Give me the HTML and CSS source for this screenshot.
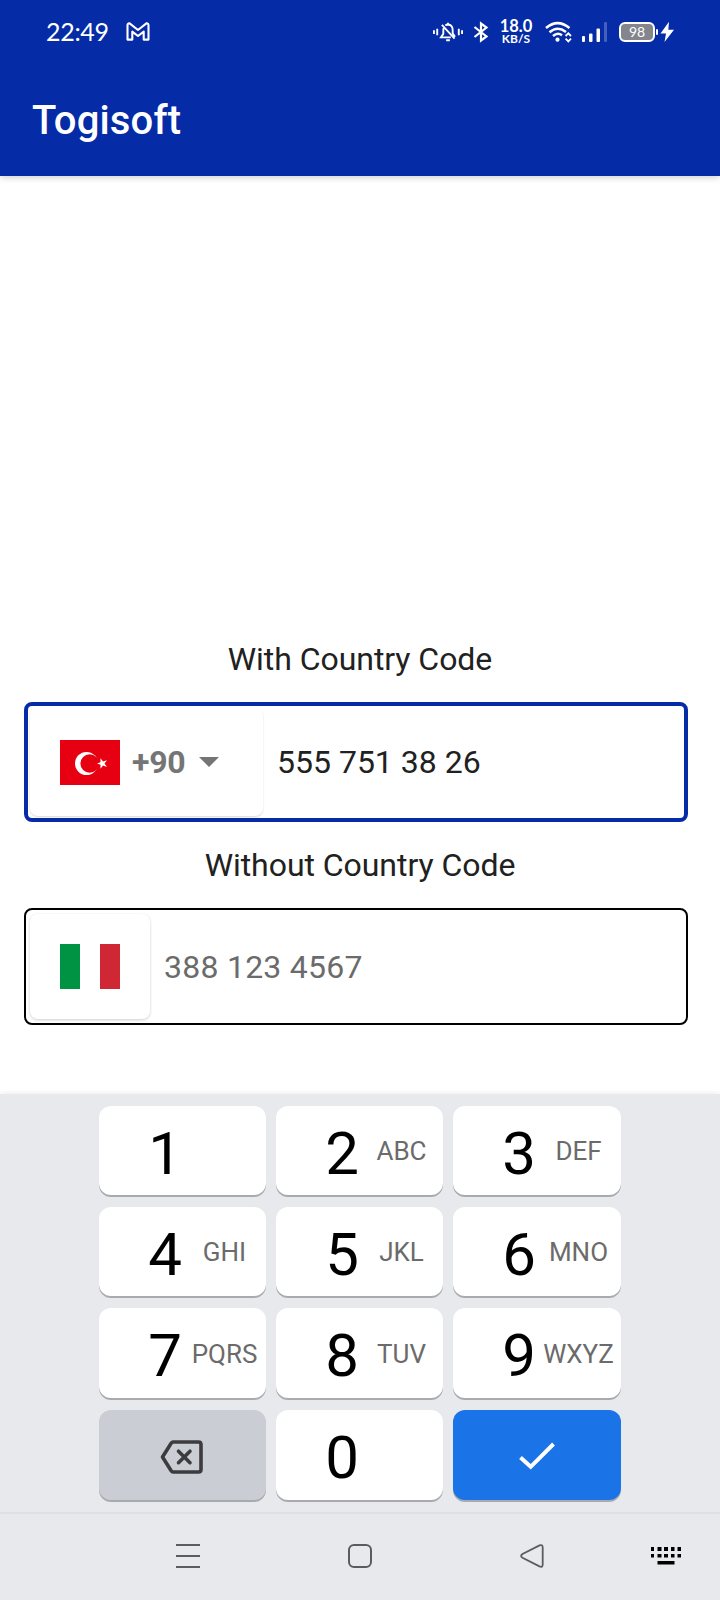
FILE: index.html
```html
<!DOCTYPE html>
<html lang="en">
<head>
<meta charset="utf-8">
<title>Togisoft</title>
<link rel="stylesheet" href="styles.css">
</head>
<body>
<header class="top">
  <div class="status">
    <span class="time">22:49</span>
    <svg class="gmail" width="24" height="20" viewBox="0 0 24 20" fill="none" stroke="#fff" stroke-width="2.1" stroke-linejoin="round"><path d="M1.5 3.2Q1.5 1.2 3.6 1.4L12 8 20.4 1.4Q22.5 1.2 22.5 3.2V17.6H17.7V9.6L12 14 6.3 9.6V17.6H1.5Z"/></svg>
    <div class="indicators">
      <svg class="bell" width="30" height="24" viewBox="0 0 32 24" fill="none" stroke="#fff" stroke-width="2"><path d="M1 10v4M4.500 8.500v7M27.500 8.500v7M31 10v4M13.200 5.100Q14.400 4 16 4Q21 4.500 21 10V13.500L23.500 17M19 17.700H8.500L11 14V10L11.300 7.800M16 2V4.500M9.500 4.500L23 19M14 20.800H18"/></svg>
      <svg class="bluetooth" width="16" height="24" viewBox="0 0 16 24" fill="none" stroke="#fff" stroke-width="2.200"><path d="M1.500 7L13.500 16.500 8 20.500V3.500L13.500 7.500 1.500 17"/></svg>
      <div class="speed"><span class="rate">18.0</span><span class="unit">KB/S</span></div>
      <svg class="wifi" width="28" height="24" viewBox="0 0 28 24" fill="none" stroke="#fff" stroke-width="2.500"><path d="M1 8Q12.500-1.800 24.500 8M4.500 12.300Q12.500 5.500 21 12M8 16Q12.500 12 17 15.200"/><circle cx="12.500" cy="19.700" r="2.100" fill="#fff" stroke="none"/><path d="M20.600 16L23.300 13.300 26 16M20.600 18.700L23.300 21.400 26 18.700" stroke-width="1.800"/></svg>
      <svg class="signal" width="26" height="24" viewBox="0 0 26 24" fill="#fff"><rect x="0" y="16" width="3" height="6" rx="1"/><rect x="7" y="13.500" width="3.500" height="8.500" rx="1"/><rect x="14.500" y="8.500" width="3.500" height="13.500" rx="1"/><rect x="22" y="2" width="3" height="20" rx="1" opacity=".25"/></svg>
      <div class="battery">98</div>
      <svg class="bolt" width="15" height="24" viewBox="0 0 15 24" fill="#fff"><path d="M9 1.800L.5 13.500H6L4.500 22 14 9.800H8.300Z"/></svg>
    </div>
  </div>
  <h1 class="title">Togisoft</h1>
</header>

<main class="content">
  <p class="label">With Country Code</p>
  <div class="field focused">
    <div class="picker with-code">
      <svg width="60" height="45" viewBox="0 0 60 45"><path fill="#e70011" d="M0 0h60v45H0z"/><circle cx="26.500" cy="23.500" r="11.500" fill="#fff"/><circle cx="29.700" cy="23.500" r="9.300" fill="#e70011"/><path fill="#fff" d="M37 23.500L40.500 22.300 40.500 18.300 43 21.500 47 20.200 44.500 23.500 47 27 43 25.600 40.500 28.800 40.500 24.700Z"/></svg>
      <span class="code">+90</span>
      <svg class="caret" width="20" height="10" viewBox="0 0 20 10"><path fill="#757575" d="M0 0h20L10 10z"/></svg>
    </div>
    <span class="number">555 751 38 26</span>
  </div>
  <p class="label second">Without Country Code</p>
  <div class="field">
    <div class="picker">
      <svg width="60" height="45" viewBox="0 0 60 45"><path fill="#009344" d="M0 0h20v45H0z"/><path fill="#fff" d="M20 0h20v45H20z"/><path fill="#cf2734" d="M40 0h20v45H40z"/></svg>
    </div>
    <span class="number hint">388 123 4567</span>
  </div>
</main>

<section class="keyboard">
  <div class="keys">
    <div class="key"><span class="digit">1</span></div>
    <div class="key"><span class="digit">2</span><span class="letters">ABC</span></div>
    <div class="key"><span class="digit">3</span><span class="letters">DEF</span></div>
    <div class="key"><span class="digit">4</span><span class="letters">GHI</span></div>
    <div class="key"><span class="digit">5</span><span class="letters">JKL</span></div>
    <div class="key"><span class="digit">6</span><span class="letters">MNO</span></div>
    <div class="key tall"><span class="digit">7</span><span class="letters">PQRS</span></div>
    <div class="key tall"><span class="digit">8</span><span class="letters">TUV</span></div>
    <div class="key tall"><span class="digit">9</span><span class="letters">WXYZ</span></div>
    <div class="key action erase">
      <svg width="44" height="36" viewBox="0 0 44 36" fill="none" stroke="#3c3c3e" stroke-width="3.600" stroke-linejoin="round"><path d="M13 3H38.500Q41 3 41 5.500V30.500Q41 33 38.500 33H13Q12 33 11 31.500L2.500 18 11 4.500Q12 3 13 3Z"/><path d="M18.500 12.200L30 23.700M30 12.200L18.500 23.700" stroke-linecap="round"/></svg>
    </div>
    <div class="key"><span class="digit">0</span></div>
    <div class="key action confirm">
      <svg width="36" height="28" viewBox="0 0 36 28" fill="none" stroke="#fff" stroke-width="4"><path d="M1.500 15.500L11.700 24.800 34.500 2"/></svg>
    </div>
  </div>
</section>

<nav class="nav">
  <svg class="menu" width="24" height="24" viewBox="0 0 24 24" stroke="#5c5c5e" stroke-width="2"><path d="M0 1h24M0 12h24M0 23h24"/></svg>
  <svg class="home" width="24" height="24" viewBox="0 0 24 24" fill="none" stroke="#5c5c5e" stroke-width="2"><rect x="1" y="1" width="22" height="22" rx="5"/></svg>
  <svg class="back" width="24" height="24" viewBox="0 0 24 24" fill="none" stroke="#5c5c5e" stroke-width="1.800"><path d="M19.500 1.400Q22.700.2 22.700 3.500V20.500Q22.700 23.800 19.500 22.400L2.500 13.700Q-.3 12 2.500 10Z"/></svg>
  <svg class="ime" width="30" height="18" viewBox="0 0 30 18" fill="#000"><path d="M0 0h3v4H0zM6.500 0h4v4h-4zM13 0h4v4h-4zM20 0h3.500v4H20zM26.500 0H30v4h-3.500zM0 7h3v3.500H0zM6.500 7h4v3.500h-4zM13 7h4v3.500h-4zM20 7h3.500v3.500H20zM26.500 7H30v3.500h-3.500zM6.500 14h17v3.500h-17z"/></svg>
</nav>
</body>
</html>
```

FILE: styles.css
```css
* { box-sizing: border-box; }
body { margin: 0; width: 720px; height: 1600px; background: #fff; font-family: Roboto, sans-serif; overflow: hidden; display: flex; flex-direction: column; }
svg { display: block; flex: none; }

.top { height: 176px; flex: none; background: #052ba6; color: #fff; box-shadow: 0 1px 7px rgba(0, 0, 0, .22); }
.status { height: 64px; display: flex; align-items: center; padding: 0 45px 0 46px; }
.time { width: 80px; margin-top: -2px; font: 25px/64px Lato, sans-serif; letter-spacing: -.3px; }
.gmail { margin-top: -1px; }
.indicators { display: flex; align-items: center; margin-left: auto; }
.bluetooth { margin-left: 10px; }
.speed { width: 36px; margin: 0 1px 0 9px; display: flex; flex-direction: column; align-items: center; font-family: Lato, sans-serif; font-weight: 700; }
.rate { font-size: 16.500px; line-height: 14px; }
.unit { font-size: 12px; line-height: 12px; }
.wifi { margin-left: 10px; }
.signal { margin-left: 9px; }
.battery { width: 36px; height: 20px; margin-left: 11px; border: 2px solid #fff; border-radius: 6px; background: #85868d; font: 14px/15px Lato, sans-serif; text-align: center; position: relative; }
.battery::after { content: ""; position: absolute; right: -5px; top: 5px; width: 2px; height: 6px; background: #fff; border-radius: 1px; }
.bolt { margin-left: 5px; }
.title { margin: 0; padding: 29px 32px 0; font-size: 40px; line-height: 56px; font-weight: 500; letter-spacing: .15px; }

.content { height: 918px; flex: none; padding: 461px 32px 0 24px; }
.label { margin: 0 0 21px; padding-left: 8px; text-align: center; font-size: 32px; line-height: 44px; color: #212121; letter-spacing: -.05px; }
.label.second { margin-top: 21px; }
.field { height: 117px; display: flex; align-items: center; border: 2px solid #000; border-radius: 8px; padding: 0 4px; }
.field.focused { height: 120px; border: 4px solid #052ba6; padding: 0 2px; }
.picker { width: 120px; height: 105px; display: flex; align-items: center; padding-left: 30px; border-radius: 8px; box-shadow: 0 1px 3px rgba(0, 0, 0, .2); }
.picker.with-code { width: 233px; height: 108px; box-shadow: 0 1px 2px rgba(0, 0, 0, .16); }
.code { width: 67px; padding-left: 12px; font-size: 32px; font-weight: 700; color: #757575; line-height: 44px; letter-spacing: -.3px; }
.caret { margin-left: 12px; }
.number { margin-left: 14px; font-size: 32px; line-height: 44px; color: #212121; }
.hint { color: #6b6b6b; letter-spacing: .25px; }

.keyboard { height: 418px; flex: none; background: #e8e9ed; padding: 12px 99px 0; box-shadow: 0 0 6px rgba(0, 0, 0, .1); }
.keys { display: grid; grid-template-columns: 167px 167px 168px; grid-template-rows: 89px 89px 90px 90px; column-gap: 10px; row-gap: 12px; }
.key { display: flex; background: #fff; border-radius: 12px; padding-left: 49px; box-shadow: 0 2px 0 #a9aaae; }
.digit { width: 34px; padding-top: 3px; text-align: center; font-size: 60px; line-height: 89px; color: #000; }
.letters { width: 83px; margin-left: 1px; text-align: center; font-size: 26px; line-height: 90px; color: #6b6b6b; }
.tall .letters { line-height: 92px; }
.key.tall { height: 90px; }
.action { padding: 0; align-items: center; justify-content: center; }
.erase { background: #cbcdd5; }
.erase svg { margin: 4px 0 0 -1px; }
.confirm { background: #1b73e8; }
.confirm svg { margin: 1px 0 0 0; }

.nav { flex: 1; display: flex; background: #e8e9ed; border-top: 2px solid #dfe0e3; padding-top: 30px; }
.menu { margin-left: 176px; }
.home { margin-left: 148px; }
.back { margin-left: 148px; }
.ime { margin: 3px 0 0 107px; }
```
